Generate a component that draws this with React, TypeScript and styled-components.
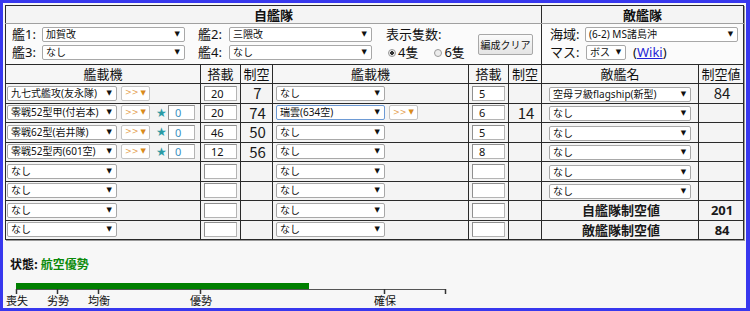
import React from "react";
import styled, { createGlobalStyle } from "styled-components";

const FONT = '"Noto Sans", "Noto Sans CJK JP", sans-serif';
const CJK = '"Noto Sans CJK JP", sans-serif';

const Global = createGlobalStyle`
  html, body { margin: 0; padding: 0; background: #fff; }
  body {
    font-family: ${FONT};
    color: #111;
  }
`;

const Frame = styled.div`
  box-sizing: border-box;
  width: 750px;
  height: 311px;
  border: 3px solid #3838ee;
  border-right-width: 4px;
  background: #f7f7f7;
  padding: 2px 0 0 2px;
  overflow: hidden;
`;

const Table = styled.table`
  border-collapse: collapse;
  table-layout: fixed;
  width: 738px;
  border: 1px solid #2a2a2a;
  box-shadow: 1px 1px 0 #9a9a9a;
`;

const SectionTh = styled.th<{ $divider?: boolean }>`
  height: 17px;
  padding: 0;
  font-size: 13px;
  line-height: 17px;
  font-weight: bold;
  background: #f4f4f4;
  border-bottom: 1px solid #a0a0a0;
  border-left: ${(p) => (p.$divider ? "1px solid #2a2a2a" : "none")};
  font-family: ${CJK};
`;

const ControlTd = styled.td<{ $divider?: boolean }>`
  height: 41px;
  padding: 3px 0 0 6px;
  vertical-align: top;
  background: #fbfbfb;
  border-left: ${(p) => (p.$divider ? "1px solid #2a2a2a" : "none")};
  border-bottom: 1px solid #2a2a2a;
  box-sizing: border-box;
`;

const HeadTd = styled.td`
  height: 18px;
  padding: 0;
  text-align: center;
  font-size: 13px;
  line-height: 18px;
  background: #f6f6f6;
  border: 1px solid #2a2a2a;
  font-family: ${CJK};
`;

const Tr = styled.tr`
  height: 19.5px;
`;

const Td = styled.td<{ $pl?: number; $center?: boolean; $big?: boolean; $bold?: boolean }>`
  padding: 0 0 0 ${(p) => p.$pl ?? 2}px;
  border: 1px solid #2a2a2a;
  background: #f4f4f4;
  vertical-align: middle;
  text-align: ${(p) => (p.$center ? "center" : "left")};
  font-size: ${(p) => (p.$big ? 15 : 13)}px;
  font-weight: ${(p) => (p.$bold ? 700 : 400)};
  font-family: ${(p) => (p.$bold ? FONT : CJK)};
  color: #1a1a1a;
  line-height: 16px;
  white-space: nowrap;
`;

const CellRow = styled.div`
  display: flex;
  align-items: center;
`;

const SelectBox = styled.div<{ $w: number; $focus?: boolean }>`
  box-sizing: border-box;
  display: inline-flex;
  align-items: center;
  justify-content: space-between;
  flex: none;
  width: ${(p) => p.$w}px;
  height: 15px;
  padding: 0 4px 0 3px;
  background: #fff;
  border: 1px solid ${(p) => (p.$focus ? "#6d9ad4" : "#a8a8a8")};
  border-radius: 2px;
  font-size: 10px;
  line-height: 13px;
  color: #111;
  white-space: nowrap;
  overflow: hidden;
  font-family: ${FONT};
`;

const Arrow = styled.span<{ $color?: string }>`
  flex: none;
  font-size: 7px;
  line-height: 7px;
  color: ${(p) => p.$color ?? "#111"};
  font-family: "DejaVu Sans", sans-serif;
`;

const ProfBox = styled.div`
  box-sizing: border-box;
  display: inline-flex;
  align-items: center;
  justify-content: space-between;
  flex: none;
  width: 29px;
  height: 15px;
  margin-left: 4px;
  padding: 0 3px 0 3px;
  background: #fff;
  border: 1px solid #c4c4c4;
  border-radius: 2px;
  font-size: 8px;
  color: #e6a356;
  font-family: "DejaVu Sans", sans-serif;
`;

const Star = styled.span`
  margin-left: 6px;
  width: 10px;
  font-size: 12px;
  line-height: 12px;
  color: #2a9aa4;
  font-family: "DejaVu Sans", sans-serif;
`;

const NumInput = styled.div<{ $w: number; $teal?: boolean }>`
  box-sizing: border-box;
  flex: none;
  width: ${(p) => p.$w}px;
  height: 15px;
  margin-left: ${(p) => (p.$teal ? 2 : 0)}px;
  padding-left: 6px;
  background: #fff;
  border: 1px solid #b4b4b4;
  border-top-color: #8f8f8f;
  border-left-color: #8f8f8f;
  font-size: 11px;
  line-height: 13px;
  color: ${(p) => (p.$teal ? "#3b8fbf" : "#111")};
  font-family: ${FONT};
`;

const ShipGrid = styled.div`
  display: grid;
  grid-template-columns: 173px 174px;
  column-gap: 13px;
  row-gap: 3px;
`;

const Field = styled.div`
  display: flex;
  align-items: center;
  height: 15px;
`;

const Label = styled.span<{ $w: number }>`
  width: ${(p) => p.$w}px;
  flex: none;
  font-size: 13px;
  line-height: 15px;
  font-family: ${FONT};
`;

const ControlRow = styled.div`
  display: flex;
  align-items: flex-start;
`;

const CountBox = styled.div`
  margin-left: 14px;
  width: 92px;
  display: flex;
  flex-direction: column;
  gap: 3px;
  font-size: 13px;
  line-height: 15px;
  font-family: ${FONT};
`;

const RadioRow = styled.div`
  display: flex;
  align-items: center;
  padding-left: 2px;
`;

const Radio = styled.span<{ $on?: boolean }>`
  box-sizing: border-box;
  width: 8px;
  height: 8px;
  border-radius: 50%;
  border: 1px solid #9a9a9a;
  background: ${(p) =>
    p.$on ? "radial-gradient(circle, #333 0 1.6px, #e8e8e8 2px)" : "#ececec"};
  margin-right: 2px;
`;

const RadioText = styled.span`
  margin-right: 16px;
`;

const ClearButton = styled.button`
  margin-top: 7px;
  width: 55px;
  height: 21px;
  padding: 0;
  border: 1px solid #a8a8a8;
  border-radius: 2px;
  background: linear-gradient(#fbfbfb, #e4e4e4);
  font-size: 10px;
  white-space: nowrap;
  color: #111;
  font-family: ${CJK};
`;

const EnemyGrid = styled.div`
  display: flex;
  flex-direction: column;
  gap: 3px;
  padding-left: 2px;
`;

const Wiki = styled.span`
  margin-left: 7px;
  font-size: 13px;
  line-height: 15px;
  font-family: ${FONT};
  a {
    color: #1f1fd6;
    text-decoration: underline;
  }
`;

const Status = styled.div`
  margin-top: 16px;
  padding-left: 5px;
  font-size: 12px;
  line-height: 16px;
  font-weight: bold;
  font-family: ${CJK};
`;

const Good = styled.span`
  color: #0a8a0a;
`;

const Gauge = styled.svg`
  display: block;
  margin-top: 8px;
  margin-left: -2px;
`;

type LeftRow = { name: string; prof: boolean; star: boolean; carry: string; air: string };
type MidRow = { name: string; prof: boolean; focus?: boolean; carry: string; air: string };

const left: LeftRow[] = [
  { name: "九七式艦攻(友永隊)", prof: true, star: false, carry: "20", air: "7" },
  { name: "零戦52型甲(付岩本)", prof: true, star: true, carry: "20", air: "74" },
  { name: "零戦62型(岩井隊)", prof: true, star: true, carry: "46", air: "50" },
  { name: "零戦52型丙(601空)", prof: true, star: true, carry: "12", air: "56" },
  { name: "なし", prof: false, star: false, carry: "", air: "" },
  { name: "なし", prof: false, star: false, carry: "", air: "" },
  { name: "なし", prof: false, star: false, carry: "", air: "" },
  { name: "なし", prof: false, star: false, carry: "", air: "" },
];

const mid: MidRow[] = [
  { name: "なし", prof: false, carry: "5", air: "" },
  { name: "瑞雲(634空)", prof: true, focus: true, carry: "6", air: "14" },
  { name: "なし", prof: false, carry: "5", air: "" },
  { name: "なし", prof: false, carry: "8", air: "" },
  { name: "なし", prof: false, carry: "", air: "" },
  { name: "なし", prof: false, carry: "", air: "" },
  { name: "なし", prof: false, carry: "", air: "" },
  { name: "なし", prof: false, carry: "", air: "" },
];

const enemy: { name?: string; total?: string; value: string }[] = [
  { name: "空母ヲ級flagship(新型)", value: "84" },
  { name: "なし", value: "" },
  { name: "なし", value: "" },
  { name: "なし", value: "" },
  { name: "なし", value: "" },
  { name: "なし", value: "" },
  { total: "自艦隊制空値", value: "201" },
  { total: "敵艦隊制空値", value: "84" },
];

const Select = ({ w, text, focus }: { w: number; text: string; focus?: boolean }) => (
  <SelectBox $w={w} $focus={focus}>
    <span>{text}</span>
    <Arrow>▼</Arrow>
  </SelectBox>
);

const Prof = () => (
  <ProfBox>
    <span>&gt;&gt;</span>
    <Arrow $color="#d98a1c">▼</Arrow>
  </ProfBox>
);

const ticks = [
  { x: 13, label: "喪失" },
  { x: 54, label: "劣勢" },
  { x: 95, label: "均衡" },
  { x: 197, label: "優勢" },
  { x: 381, label: "確保" },
  { x: 442, label: "" },
];

export default function App() {
  return (
    <>
      <Global />
      <Frame>
        <Table>
          <colgroup>
            <col style={{ width: 195 }} />
            <col style={{ width: 40 }} />
            <col style={{ width: 32 }} />
            <col style={{ width: 196 }} />
            <col style={{ width: 40 }} />
            <col style={{ width: 33 }} />
            <col style={{ width: 157 }} />
            <col style={{ width: 45 }} />
          </colgroup>
          <tbody>
            <tr>
              <SectionTh colSpan={6}>自艦隊</SectionTh>
              <SectionTh colSpan={2} $divider>
                敵艦隊
              </SectionTh>
            </tr>
            <tr>
              <ControlTd colSpan={6}>
                <ControlRow>
                  <ShipGrid>
                    <Field>
                      <Label $w={30}>艦1:</Label>
                      <Select w={143} text="加賀改" />
                    </Field>
                    <Field>
                      <Label $w={31}>艦2:</Label>
                      <Select w={143} text="三隈改" />
                    </Field>
                    <Field>
                      <Label $w={30}>艦3:</Label>
                      <Select w={143} text="なし" />
                    </Field>
                    <Field>
                      <Label $w={31}>艦4:</Label>
                      <Select w={143} text="なし" />
                    </Field>
                  </ShipGrid>
                  <CountBox>
                    <span>表示隻数:</span>
                    <RadioRow>
                      <Radio $on />
                      <RadioText>4隻</RadioText>
                      <Radio />
                      <span>6隻</span>
                    </RadioRow>
                  </CountBox>
                  <ClearButton>編成クリア</ClearButton>
                </ControlRow>
              </ControlTd>
              <ControlTd colSpan={2} $divider>
                <EnemyGrid>
                  <Field>
                    <Label $w={35}>海域:</Label>
                    <Select w={153} text="(6-2) MS諸島沖" />
                  </Field>
                  <Field>
                    <Label $w={36}>マス:</Label>
                    <Select w={40} text="ボス" />
                    <Wiki>
                      (<a>Wiki</a>)
                    </Wiki>
                  </Field>
                </EnemyGrid>
              </ControlTd>
            </tr>
            <tr>
              <HeadTd>艦載機</HeadTd>
              <HeadTd>搭載</HeadTd>
              <HeadTd>制空</HeadTd>
              <HeadTd>艦載機</HeadTd>
              <HeadTd>搭載</HeadTd>
              <HeadTd>制空</HeadTd>
              <HeadTd>敵艦名</HeadTd>
              <HeadTd>制空値</HeadTd>
            </tr>
            {left.map((l, i) => {
              const m = mid[i];
              const e = enemy[i];
              return (
                <Tr key={i}>
                  <Td $pl={1}>
                    <CellRow>
                      <Select w={110} text={l.name} />
                      {l.prof && <Prof />}
                      {l.star && (
                        <>
                          <Star>★</Star>
                          <NumInput $w={27} $teal>
                            0
                          </NumInput>
                        </>
                      )}
                    </CellRow>
                  </Td>
                  <Td $pl={3}>
                    <NumInput $w={33}>{l.carry}</NumInput>
                  </Td>
                  <Td $center $big>
                    {l.air}
                  </Td>
                  <Td $pl={3}>
                    <CellRow>
                      <Select w={109} text={m.name} focus={m.focus} />
                      {m.prof && <Prof />}
                    </CellRow>
                  </Td>
                  <Td $pl={3}>
                    <NumInput $w={33}>{m.carry}</NumInput>
                  </Td>
                  <Td $center $big>
                    {m.air}
                  </Td>
                  {e.total ? (
                    <>
                      <Td $center $bold>
                        {e.total}
                      </Td>
                      <Td $center $bold>
                        {e.value}
                      </Td>
                    </>
                  ) : (
                    <>
                      <Td $pl={7}>
                        <Select w={142} text={e.name ?? ""} />
                      </Td>
                      <Td $center $big>
                        {e.value}
                      </Td>
                    </>
                  )}
                </Tr>
              );
            })}
          </tbody>
        </Table>
        <Status>
          状態:&nbsp;<Good>航空優勢</Good>
        </Status>
        <Gauge width="460" height="28" viewBox="0 0 460 28">
          <rect x={13} y={3} width={293} height={6} fill="#008000" />
          <line x1={13} y1={9.5} x2={443} y2={9.5} stroke="#555" strokeWidth={1} />
          {ticks.map((t) => (
            <g key={t.x}>
              <line x1={t.x + 0.5} y1={9} x2={t.x + 0.5} y2={14} stroke="#333" strokeWidth={1.5} />
              {t.label && (
                <text
                  x={t.x + 1}
                  y={25}
                  fontSize={11}
                  textAnchor="middle"
                  fill="#111"
                  fontFamily='"Noto Sans CJK JP", sans-serif'
                >
                  {t.label}
                </text>
              )}
            </g>
          ))}
        </Gauge>
      </Frame>
    </>
  );
}
